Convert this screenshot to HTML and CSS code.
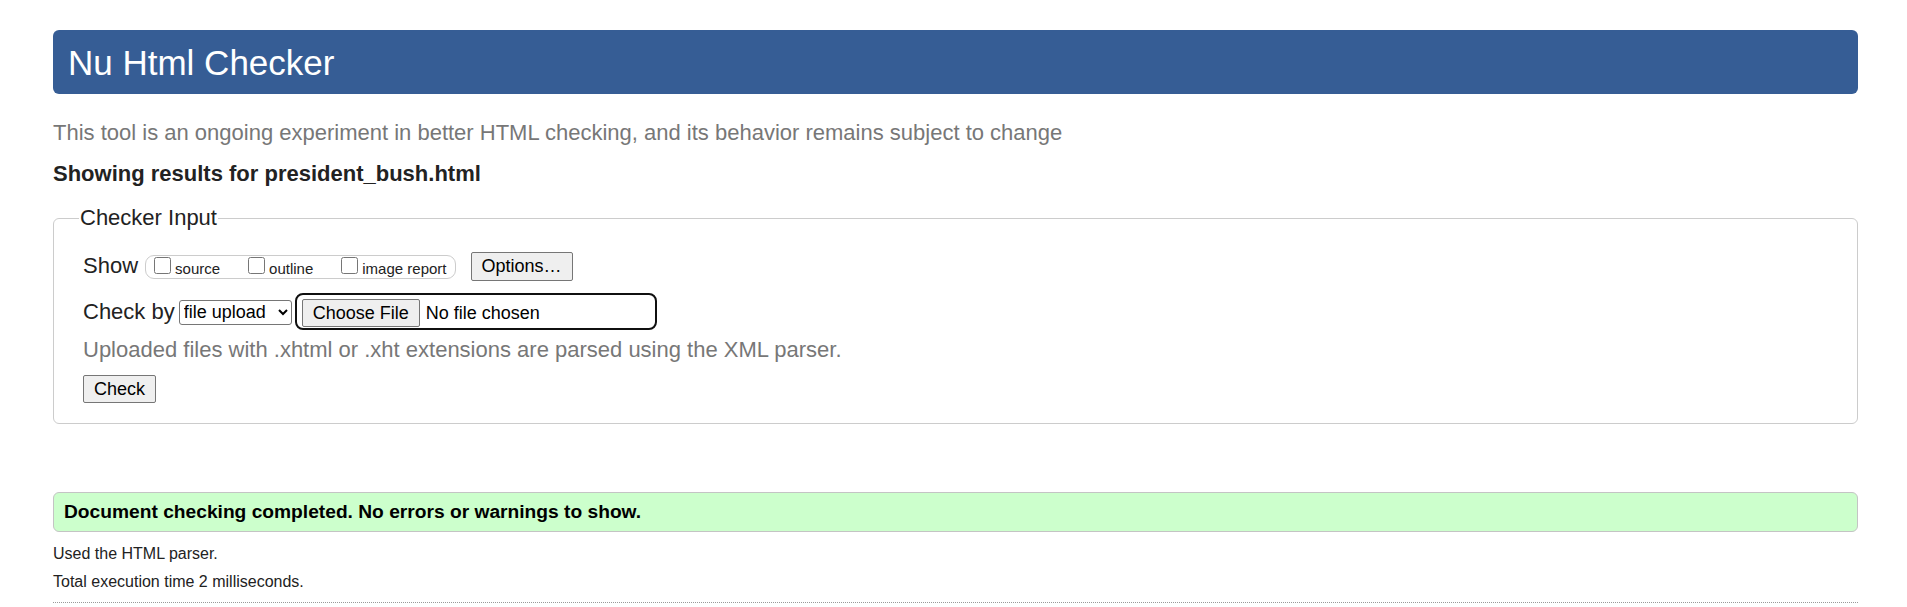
FILE: index.html
```html
<!DOCTYPE html>
<html lang="en">
<head>
<meta charset="utf-8">
<title>Showing results for president_bush.html - Nu Html Checker</title>
<link rel="stylesheet" href="styles.css">
</head>
<body>
<main class="page">
  <h1 class="masthead">Nu Html Checker</h1>
  <p class="intro">This tool is an ongoing experiment in better HTML checking, and its behavior remains subject to change</p>
  <p class="results-for">Showing results for president_bush.html</p>
  <form class="checker">
    <fieldset class="input-set">
      <legend class="legend">Checker Input</legend>
      <div class="row show-row">
        <span class="label">Show</span>
        <span class="options-group">
          <label class="opt"><input type="checkbox" class="cb"><span class="opt-text">source</span></label>
          <label class="opt"><input type="checkbox" class="cb"><span class="opt-text">outline</span></label>
          <label class="opt"><input type="checkbox" class="cb"><span class="opt-text">image report</span></label>
        </span>
        <button type="button" class="btn options-btn">Options…</button>
      </div>
      <div class="row checkby-row">
        <span class="label">Check by</span>
        <select class="method"><option>file upload</option></select>
        <span class="file-field">
          <button type="button" class="btn file-btn">Choose File</button>
          <span class="file-name">No file chosen</span>
        </span>
      </div>
      <p class="hint">Uploaded files with .xhtml or .xht extensions are parsed using the XML parser.</p>
      <button type="submit" class="btn check-btn">Check</button>
    </fieldset>
  </form>
  <p class="success">Document checking completed. No errors or warnings to show.</p>
  <p class="meta meta-first">Used the HTML parser.</p>
  <p class="meta meta-second">Total execution time 2 milliseconds.</p>
  <hr class="rule">
</main>
</body>
</html>
```

FILE: styles.css
```css
* { box-sizing: border-box; }
html, body { margin: 0; padding: 0; background: #fff; }
body {
  font-family: "Liberation Sans", Arial, sans-serif;
  color: #222;
}
.page { padding: 30px 49px 0 53px; }

.masthead {
  margin: 0;
  height: 64px;
  line-height: 66px;
  padding-left: 15px;
  background: #365d95;
  color: #fff;
  font-size: 35px;
  font-weight: normal;
  border-radius: 6px;
}

.intro {
  margin: 26px 0 0;
  font-size: 22px;
  line-height: 26px;
  color: #777;
}

.results-for {
  margin: 15px 0 0;
  font-size: 22px;
  line-height: 26px;
  font-weight: bold;
  color: #222;
}

.checker { margin: 18px 0 0; }

.input-set {
  margin: 0;
  min-width: 0;
  border: 1px solid #ccc;
  border-radius: 6px;
  padding: 21px 20px 20px 29px;
}

.legend {
  font-size: 22px;
  line-height: 26px;
  padding: 0 1px;
  margin-left: -4px;
  color: #222;
}

.row { display: flex; align-items: center; }

.label {
  font-size: 22px;
  line-height: 26px;
  color: #222;
}

.show-row { height: 29px; }
.show-row .label { margin-bottom: 2px; }

.options-group {
  display: flex;
  align-items: flex-start;
  gap: 28px;
  height: 24px;
  margin-left: 7px;
  padding: 0 8px;
  border: 1px solid #ccc;
  border-radius: 9px;
  font-size: 15px;
  color: #222;
}

.opt {
  display: flex;
  align-items: flex-start;
  gap: 4px;
  margin-top: 1px;
}

.cb {
  width: 17px;
  height: 17px;
  margin: 0;
}

.opt-text {
  margin-top: 3px;
  line-height: 17px;
}

.btn {
  height: 28px;
  padding: 0 10px;
  font-family: "Liberation Sans", Arial, sans-serif;
  font-size: 18px;
  color: #000;
  background: #efefef;
  border: 1px solid #767676;
  border-radius: 2px;
}

.options-btn { height: 29px; margin-left: 15px; }

.checkby-row { height: 37px; margin-top: 12px; }

.method {
  width: 113px;
  height: 25px;
  margin: 1px 0 0 4px;
  font-family: "Liberation Sans", Arial, sans-serif;
  font-size: 18px;
  color: #000;
  background: #fff;
  border: 1px solid #767676;
  border-radius: 3px;
}

.file-field {
  display: flex;
  align-items: center;
  width: 362px;
  height: 37px;
  margin-left: 3px;
  padding: 3px 0 0 5px;
  border: 2px solid #101010;
  border-radius: 8px;
}

.file-name {
  margin-left: 6px;
  font-size: 18px;
  color: #000;
}

.hint {
  margin: 7px 0 0;
  font-size: 22px;
  line-height: 26px;
  color: #777;
}

.check-btn { display: block; margin-top: 12px; }

.success {
  margin: 68px 0 0;
  height: 40px;
  padding-left: 10px;
  line-height: 38px;
  font-size: 19.2px;
  font-weight: bold;
  color: #000;
  background: #ccffcc;
  border: 1px solid #c4c4c4;
  border-radius: 6px;
}

.meta {
  margin: 0;
  font-size: 16px;
  line-height: 20px;
  color: #222;
}
.meta-first { margin-top: 12px; }
.meta-second { margin-top: 8px; }

.rule {
  margin: 10px 0 0;
  height: 0;
  border: 0;
  border-top: 1px dotted #999;
}
```
